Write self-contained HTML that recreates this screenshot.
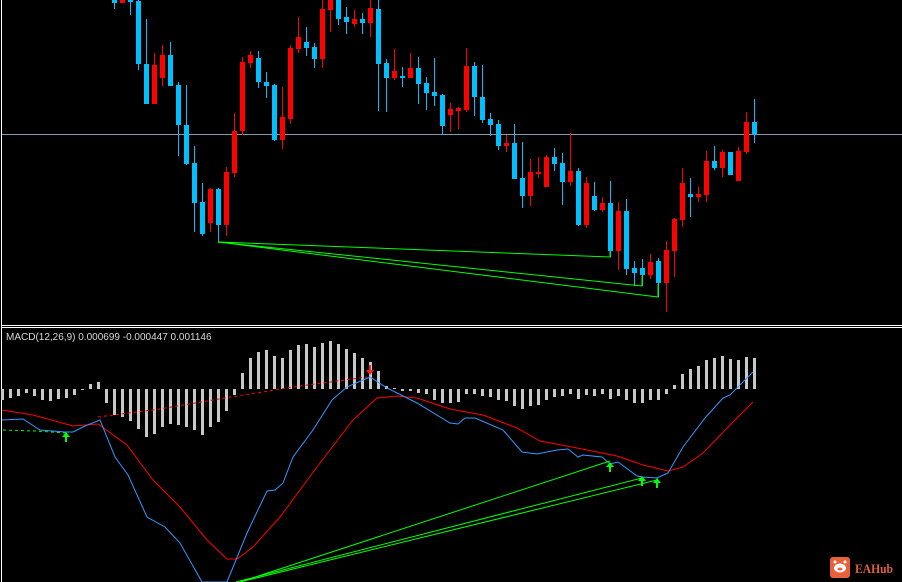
<!DOCTYPE html>
<html><head><meta charset="utf-8"><style>
html,body{margin:0;padding:0;background:#000;}
svg{display:block;}
</style></head><body>
<svg width="902" height="582" viewBox="0 0 902 582" xmlns="http://www.w3.org/2000/svg">
<rect width="902" height="582" fill="#000"/>
<line x1="1.5" y1="0" x2="1.5" y2="582" stroke="#fff" stroke-width="1"/>
<line x1="1" y1="325.5" x2="902" y2="325.5" stroke="#fff"/>
<line x1="1" y1="327.5" x2="902" y2="327.5" stroke="#fff"/>
<line x1="2" y1="134.5" x2="902" y2="134.5" stroke="#8a9aae"/>
<!-- blue candles -->
<path stroke="#00bfff" stroke-width="1" fill="none" d="M114.5 0V9M130.5 0V15M138.5 0V70M146.5 19V104M170.5 42V86M178.5 82V156M186.5 85V165M194.5 146V232M202.5 183V236M218.5 188V243M258.5 51V88M266.5 72V98M274.5 84V141M306.5 27V56M314.5 43V68M338.5 0V25M346.5 7V34M362.5 13V34M378.5 0V111M386.5 59V112M402.5 67V87M418.5 57V104M426.5 77V110M434.5 58V106M442.5 94V135M474.5 62V116M482.5 65V123M490.5 113V136M498.5 120V150M514.5 124V179M522.5 142V208M554.5 148V171M562.5 153V205M578.5 168V226M594.5 182V211M610.5 181V257M626.5 199V275M634.5 261V286M642.5 259V286M658.5 258V297M690.5 178V217M714.5 146V170M754.5 99V143"/>
<path fill="#00bfff" d="M112 0h5V3h-5zM128 0h5V2h-5zM136 1h5V64h-5zM144 64h5V104h-5zM168 55h5V86h-5zM176 85h5V125h-5zM184 125h5V164h-5zM192 163h5V203h-5zM200 202h5V234h-5zM216 189h5V225h-5zM256 58h5V82h-5zM264 82h5V86h-5zM272 85h5V140h-5zM304 42h5V48h-5zM312 47h5V59h-5zM336 0h5V19h-5zM344 17h5V22h-5zM360 19h5V23h-5zM376 9h5V64h-5zM384 63h5V78h-5zM400 76h5V78h-5zM416 68h5V84h-5zM424 83h5V93h-5zM432 92h5V96h-5zM440 95h5V126h-5zM472 66h5V97h-5zM480 97h5V120h-5zM488 119h5V125h-5zM496 124h5V146h-5zM512 143h5V179h-5zM520 178h5V196h-5zM552 157h5V164h-5zM560 163h5V182h-5zM576 171h5V225h-5zM592 196h5V210h-5zM608 203h5V251h-5zM624 211h5V269h-5zM632 268h5V273h-5zM640 268h5V275h-5zM656 261h5V283h-5zM688 194h5V197h-5zM712 161h5V168h-5zM728 152h5V175h-5zM752 122h5V135h-5z"/>
<!-- red candles -->
<path stroke="#ff0000" stroke-width="1" fill="none" d="M154.5 53V104M162.5 45V86M210.5 188V232M226.5 167V236M234.5 113V177M242.5 57V135M250.5 51V68M282.5 87V149M290.5 45V124M298.5 17V53M322.5 0V68M330.5 0V32M354.5 10V27M370.5 0V37M394.5 49V80M410.5 53V78M450.5 103V132M458.5 107V129M466.5 48V112M506.5 135V152M530.5 159V206M538.5 157V178M546.5 155V187M570.5 133V186M586.5 177V228M602.5 197V212M618.5 202V270M650.5 254V279M666.5 241V312M674.5 218V277M682.5 168V227M698.5 187V202M706.5 151V202M722.5 150V177M738.5 147V181M746.5 112V154"/>
<path fill="#ff0000" d="M120 0h5V3h-5zM152 65h5V104h-5zM160 55h5V78h-5zM208 189h5V223h-5zM224 172h5V225h-5zM232 131h5V173h-5zM240 62h5V131h-5zM248 55h5V63h-5zM280 117h5V140h-5zM288 48h5V119h-5zM296 37h5V49h-5zM320 9h5V59h-5zM328 0h5V10h-5zM352 19h5V24h-5zM368 8h5V23h-5zM392 71h5V78h-5zM408 68h5V78h-5zM448 109h5V115h-5zM456 108h5V111h-5zM464 66h5V110h-5zM504 143h5V146h-5zM528 172h5V196h-5zM536 172h5V174h-5zM544 157h5V187h-5zM568 171h5V182h-5zM584 183h5V225h-5zM600 203h5V210h-5zM616 211h5V251h-5zM648 262h5V275h-5zM664 250h5V283h-5zM672 219h5V251h-5zM680 183h5V220h-5zM696 194h5V197h-5zM704 161h5V195h-5zM720 152h5V168h-5zM736 151h5V181h-5zM744 122h5V152h-5z"/>
<!-- top green lines -->
<g stroke="#00ff00" stroke-width="1" fill="none">
<polyline points="218,242 610,257 610,251"/>
<polyline points="218,242 642,286 642,276"/>
<polyline points="218,242 658,297 658,284"/>
</g>
<!-- MACD -->
<text x="6" y="340" font-family="Liberation Sans, sans-serif" font-size="10" fill="#d8d8d8">MACD(12,26,9) 0.000699 -0.000447 0.001146</text>
<path stroke="#c8c8c8" stroke-width="3" fill="none" d="M2.5 389V400M10.5 389V398M18.5 389V396M26.5 389V393M34.5 389V396M42.5 389V400M50.5 389V401M58.5 389V399M66.5 389V398M74.5 389V395M82.5 389V390M90.5 389V384M98.5 389V382M106.5 389V403M114.5 389V415M122.5 389V417M130.5 389V421M138.5 389V429M146.5 389V437M154.5 389V434M162.5 389V427M170.5 389V424M178.5 389V425M186.5 389V427M194.5 389V430M202.5 389V435M210.5 389V427M218.5 389V422M226.5 389V411M234.5 389V395M242.5 389V373M250.5 389V358M258.5 389V352M266.5 389V350M274.5 389V356M282.5 389V358M290.5 389V350M298.5 389V345M306.5 389V344M314.5 389V347M322.5 389V343M330.5 389V341M338.5 389V344M346.5 389V349M354.5 389V353M362.5 389V358M370.5 389V362M378.5 389V371M386.5 389V386M394.5 389V388M402.5 389V391M410.5 389V391M418.5 389V393M426.5 389V394M434.5 389V400M442.5 389V403M450.5 389V403M458.5 389V402M466.5 389V394M474.5 389V394M482.5 389V396M490.5 389V397M498.5 389V400M506.5 389V401M514.5 389V406M522.5 389V409M530.5 389V406M538.5 389V405M546.5 389V400M554.5 389V397M562.5 389V396M570.5 389V394M578.5 389V399M586.5 389V395M594.5 389V396M602.5 389V394M610.5 389V399M618.5 389V396M626.5 389V400M634.5 389V403M642.5 389V403M650.5 389V400M658.5 389V400M666.5 389V394M674.5 389V385M682.5 389V374M690.5 389V369M698.5 389V366M706.5 389V360M714.5 389V358M722.5 389V356M730.5 389V359M738.5 389V360M746.5 389V357M754.5 389V358"/>
<polyline fill="none" stroke="#ff0000" stroke-dasharray="3,3" points="98,417 160,409 225,398 293,387 367,377"/>
<polyline fill="none" stroke="#00ff00" stroke-dasharray="3,3" points="3,430 35,431 67,433"/>
<polyline fill="none" stroke="#ff0000" stroke-width="1" points="2,410 33,415 73,426 98,424 127,445 153,480 180,507 207,540 227,559 237,559 253,547 280,517 320,463 353,420 377,398 397,396 417,398 450,409 483,415 517,428 540,441 577,448 617,456 643,465 668,471 683,467 703,453 733,422 753,402"/>
<polyline fill="none" stroke="#3399ff" stroke-width="1" points="2,420 23,419 40,430 65,432 73,432 85,426 100,420 115,457 128,475 147,517 165,527 180,543 202,582 227,582 247,533 267,491 275,490 283,483 293,457 313,430 332,400 347,387 370,377 387,388 417,403 450,423 458,424 465,418 475,418 503,430 522,452 537,454 557,450 568,449 578,457 583,455 602,457 610,464 618,462 637,476 643,477 657,478 668,473 683,447 705,418 723,398 730,395 753,372"/>
<g stroke="#00ff00" stroke-width="1" fill="none">
<line x1="240" y1="582" x2="610" y2="461"/>
<line x1="236" y1="582" x2="642" y2="478"/>
<line x1="240" y1="582" x2="657" y2="480"/>
</g>
<g fill="#00ff00">
<path d="M66,432 l-4,5 h3 v5 h2 v-5 h3 z"/>
<path d="M610,462 l-4,5 h3 v5 h2 v-5 h3 z"/>
<path d="M642,476 l-4,5 h3 v5 h2 v-5 h3 z"/>
<path d="M657,478 l-4,5 h3 v5 h2 v-5 h3 z"/>
</g>
<path d="M370,375 l-4,-5 h3 v-5 h2 v5 h3 z" fill="#ff2020"/>
<!-- logo -->
<rect x="830" y="557" width="20" height="21" rx="3" fill="#e8603c"/>
<ellipse cx="840" cy="568" rx="6" ry="4.5" fill="#fff"/>
<circle cx="835" cy="562" r="1.5" fill="#fff"/><circle cx="845" cy="562" r="1.5" fill="#fff"/>
<ellipse cx="840" cy="569" rx="2.5" ry="1.5" fill="#e8603c"/>
<text x="855" y="573" font-family="Liberation Serif, serif" font-weight="bold" font-size="13" textLength="38" lengthAdjust="spacingAndGlyphs" fill="#e0603c">EAHub</text>
</svg>
</body></html>
